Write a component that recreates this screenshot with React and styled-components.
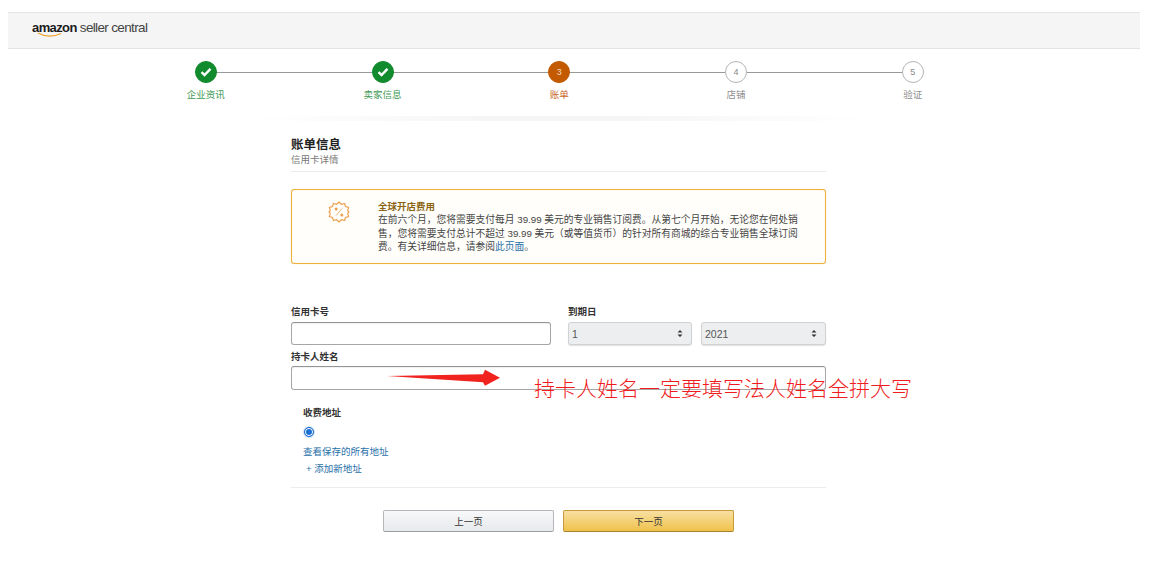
import React from "react";
import styled, { createGlobalStyle } from "styled-components";

const CJK = `"Liberation Sans", "Noto Sans CJK SC", sans-serif`;

const GlobalStyle = createGlobalStyle`
  html, body {
    margin: 0;
    padding: 0;
    background: #fff;
    font-family: ${CJK};
    color: #333;
  }
`;

const Page = styled.div`
  width: 1156px;
  height: 569px;
  overflow: hidden;
  padding-top: 12px;
  box-sizing: border-box;
`;

const Header = styled.header`
  display: flex;
  align-items: center;
  height: 37px;
  margin: 0 16px 0 8px;
  padding-left: 24px;
  background: #f5f5f5;
  border-top: 1px solid #e4e4e4;
  border-bottom: 1px solid #e2e2e2;
  box-sizing: border-box;
`;

const Logo = styled.div`
  position: relative;
  display: flex;
  align-items: baseline;
  gap: 3px;
  margin-top: -6px;
  font-size: 13.5px;
  line-height: 16px;
  letter-spacing: -0.65px;
  color: #444;
`;

const LogoBrand = styled.span`
  font-size: 13px;
  font-weight: 700;
  color: #1c1c1c;
  letter-spacing: -0.6px;
`;

const Smile = styled.svg`
  position: absolute;
  left: 5px;
  top: 12px;
`;

const Stepper = styled.ol`
  display: grid;
  grid-template-columns: repeat(5, 176.75px);
  margin: 12px 0 0 117.5px;
  padding: 0;
  list-style: none;
`;

const Step = styled.li`
  position: relative;
  display: flex;
  flex-direction: column;
  align-items: center;
  gap: 5px;
  font-size: 9.5px;
  line-height: 14px;
  color: ${p => p.$color};

  &:not(:last-child)::after {
    content: "";
    position: absolute;
    top: 10.5px;
    left: 50%;
    width: 100%;
    height: 1px;
    background: #999;
  }
`;

const Circle = styled.span`
  position: relative;
  z-index: 1;
  display: flex;
  align-items: center;
  justify-content: center;
  width: 22px;
  height: 22px;
  box-sizing: border-box;
  border-radius: 50%;
  font-size: 9px;
  background: ${p => p.$fill || "#fff"};
  border: 1px solid ${p => p.$fill || "#b5b5b5"};
  color: ${p => (p.$fill ? "#f3d9c4" : "#888")};
`;

const StepShadow = styled.div`
  width: 620px;
  height: 5px;
  margin: 14px 0 0 250px;
  background: linear-gradient(
    90deg,
    rgba(240, 240, 240, 0),
    #f1f1f1 40%,
    #f1f1f1 60%,
    rgba(240, 240, 240, 0)
  );
  opacity: 0.7;
`;

const Form = styled.form`
  position: relative;
  width: 535px;
  margin: 17px 0 0 291px;
`;

const Title = styled.h1`
  margin: 0;
  font-size: 12.5px;
  line-height: 15px;
  font-weight: 700;
  color: #222;
`;

const Subtitle = styled.p`
  margin: 0;
  padding-bottom: 5px;
  font-size: 9.5px;
  line-height: 13px;
  color: #777;
  border-bottom: 1px solid #ececec;
`;

const Notice = styled.section`
  display: flex;
  height: 75px;
  margin-top: 17px;
  padding-top: 10px;
  box-sizing: border-box;
  border: 1px solid #f0b040;
  border-radius: 3px;
  background: #fffefb;
  box-shadow: 0 0 1px #f7cf80, inset 0 0 1px #f7cf80;
`;

const NoticeIcon = styled.div`
  width: 86px;
  padding: 1px 0 0 36px;
  box-sizing: border-box;
`;

const NoticeBody = styled.div`
  width: 424px;
  font-size: 9.75px;
  line-height: 13.3px;
  color: #444;
`;

const NoticeTitle = styled.div`
  font-size: 9.5px;
  font-weight: 700;
  color: #8a6410;
`;

const Link = styled.a`
  color: #1f6fa8;
  text-decoration: none;
`;

const FieldRow = styled.div`
  display: flex;
  gap: 17px;
  margin-top: 41px;
`;

const Field = styled.div`
  display: flex;
  flex-direction: column;
  gap: 4px;
  width: ${p => p.$width || "auto"};
`;

const Label = styled.label`
  font-size: 9.5px;
  line-height: 13px;
  font-weight: 700;
  color: #333;
`;

const TextInput = styled.input`
  height: 23px;
  padding: 0 6px;
  box-sizing: border-box;
  width: 100%;
  background: #fff;
  border: 1px solid #a6a6a6;
  border-top-color: #949494;
  border-radius: 3px;
  box-shadow: inset 0 1px 1px rgba(0, 0, 0, 0.06);
  outline: none;
`;

const NameInput = styled(TextInput)`
  height: 24px;
`;

const Selects = styled.div`
  display: grid;
  grid-template-columns: 124px 125px;
  gap: 9px;
`;

const SelectWrap = styled.div`
  position: relative;
  height: 23px;
`;

const Select = styled.select`
  appearance: none;
  width: 100%;
  height: 100%;
  padding: 0 3px;
  font-family: ${CJK};
  font-size: 10.5px;
  color: #555;
  background: #eceef0;
  border: 1px solid #cfd1d3;
  border-radius: 3px;
  box-shadow: 0 1px 1px rgba(0, 0, 0, 0.12);
  outline: none;
`;

const Caret = styled.svg`
  position: absolute;
  right: 9px;
  top: 8px;
  pointer-events: none;
`;

const NameField = styled(Field)`
  position: relative;
  gap: 3px;
  margin-top: 5px;
`;

const Arrow = styled.svg`
  position: absolute;
  left: 95px;
  top: 18px;
`;

const Annotation = styled.span`
  position: absolute;
  left: 243px;
  top: 25px;
  font-family: "Noto Sans CJK SC", sans-serif;
  font-size: 21px;
  font-weight: 300;
  line-height: 24px;
  white-space: nowrap;
  color: #f01c1e;
`;

const Billing = styled.div`
  display: flex;
  flex-direction: column;
  align-items: flex-start;
  margin-top: 16px;
  padding: 0 0 12px 12px;
  border-bottom: 1px solid #ececec;
`;

const BillingTitle = styled.div`
  font-size: 9.5px;
  line-height: 13px;
  font-weight: 700;
  color: #333;
`;

const Radio = styled.input`
  appearance: none;
  width: 10px;
  height: 10px;
  margin: 8px 0 8px 1px;
  box-sizing: border-box;
  border: 1.5px solid #1a6fd4;
  border-radius: 50%;
  background: #1a6fd4;
  box-shadow: inset 0 0 0 1px #fff, 0 0 0 1px #cfe2f7;
`;

const BillingLink = styled(Link)`
  font-size: 9.5px;
  line-height: 13px;
  margin-left: ${p => p.$indent || 0}px;
  margin-top: ${p => p.$top || 0}px;
`;

const Actions = styled.div`
  display: flex;
  gap: 9px;
  margin: 22px 0 0 92px;
`;

const Button = styled.button`
  width: 171px;
  height: 22px;
  padding: 0;
  font-family: ${CJK};
  font-size: 9.5px;
  color: #333;
  border-radius: 2px;
  border: 1px solid ${p => (p.$primary ? "#c89a3a" : "#b4b6ba")};
  border-bottom-color: ${p => (p.$primary ? "#a88230" : "#9c9ea2")};
  background: ${p =>
    p.$primary
      ? "linear-gradient(#f8e0a3, #f0c14b)"
      : "linear-gradient(#f7f8fa, #e8e9ec)"};
`;

const steps = [
  { label: "企业资讯", done: true },
  { label: "卖家信息", done: true },
  { label: "账单", active: true },
  { label: "店铺" },
  { label: "验证" },
];

const stepColor = s => (s.done ? "#3f9a55" : s.active ? "#c7672a" : "#8f8f8f");

const Check = () => (
  <svg width="12" height="10" viewBox="0 0 12 10">
    <path d="M1.5 5.2 L4.5 8 L10.5 1.8" fill="none" stroke="#fff" strokeWidth="2.4" />
  </svg>
);

const BadgeIcon = () => (
  <svg width="22" height="22" viewBox="0 0 22 22" fill="none" stroke="#eba14e" strokeWidth="1.2">
    <path d="M11 1 L13.4 3.3 L16.6 2.4 L17.5 5.5 L20.6 6.4 L19.7 9.6 L21 11 L19.7 12.4 L20.6 15.6 L17.5 16.5 L16.6 19.6 L13.4 18.7 L11 21 L8.6 18.7 L5.4 19.6 L4.5 16.5 L1.4 15.6 L2.3 12.4 L1 11 L2.3 9.6 L1.4 6.4 L4.5 5.5 L5.4 2.4 L8.6 3.3 Z" />
    <path d="M14 7.5 L8 14.5" strokeWidth="0.8" />
    <circle cx="8.2" cy="8" r="1.5" fill="#eba14e" stroke="none" />
    <circle cx="13.8" cy="14" r="1.5" fill="#eba14e" stroke="none" />
  </svg>
);

export default function App() {
  return (
    <Page>
      <GlobalStyle />
      <Header>
        <Logo>
          <LogoBrand>amazon</LogoBrand>
          <span>seller central</span>
          <Smile width="28" height="6" viewBox="0 0 28 6">
            <path d="M1 1 Q 12 7 24 1.5" fill="none" stroke="#f0a028" strokeWidth="1.2" />
          </Smile>
        </Logo>
      </Header>

      <Stepper>
        {steps.map((s, i) => (
          <Step key={s.label} $color={stepColor(s)}>
            <Circle $fill={s.done ? "#128a2e" : s.active ? "#c45a00" : null}>
              {s.done ? <Check /> : i + 1}
            </Circle>
            {s.label}
          </Step>
        ))}
      </Stepper>
      <StepShadow />

      <Form>
        <Title>账单信息</Title>
        <Subtitle>信用卡详情</Subtitle>

        <Notice>
          <NoticeIcon>
            <BadgeIcon />
          </NoticeIcon>
          <NoticeBody>
            <NoticeTitle>全球开店费用</NoticeTitle>
            在前六个月，您将需要支付每月 39.99 美元的专业销售订阅费。从第七个月开始，无论您在何处销售，您将需要支付总计不超过 39.99 美元（或等值货币）的针对所有商城的综合专业销售全球订阅费。有关详细信息，请参阅
            <Link href="#">此页面</Link>。
          </NoticeBody>
        </Notice>

        <FieldRow>
          <Field $width="260px">
            <Label>信用卡号</Label>
            <TextInput />
          </Field>
          <Field $width="258px">
            <Label>到期日</Label>
            <Selects>
              <SelectWrap>
                <Select defaultValue="1">
                  <option>1</option>
                </Select>
                <Caret width="6" height="7" viewBox="0 0 6 7">
                  <path d="M3 0 L5.5 2.6 H0.5 Z M3 7 L0.5 4.4 H5.5 Z" fill="#333" />
                </Caret>
              </SelectWrap>
              <SelectWrap>
                <Select defaultValue="2021">
                  <option>2021</option>
                </Select>
                <Caret width="6" height="7" viewBox="0 0 6 7">
                  <path d="M3 0 L5.5 2.6 H0.5 Z M3 7 L0.5 4.4 H5.5 Z" fill="#333" />
                </Caret>
              </SelectWrap>
            </Selects>
          </Field>
        </FieldRow>

        <NameField>
          <Label>持卡人姓名</Label>
          <NameInput />
          <Arrow width="116" height="20" viewBox="0 0 116 20">
            <path d="M1 8 L97 6.3 L99 1.7 L114 9.7 L99 17.7 L97 14.3 Z" fill="#f0231f" />
          </Arrow>
          <Annotation>持卡人姓名一定要填写法人姓名全拼大写</Annotation>
        </NameField>

        <Billing>
          <BillingTitle>收费地址</BillingTitle>
          <Radio type="radio" defaultChecked />
          <BillingLink href="#">查看保存的所有地址</BillingLink>
          <BillingLink href="#" $indent={3} $top={4}>+ 添加新地址</BillingLink>
        </Billing>

        <Actions>
          <Button type="button">上一页</Button>
          <Button type="button" $primary>下一页</Button>
        </Actions>
      </Form>
    </Page>
  );
}
